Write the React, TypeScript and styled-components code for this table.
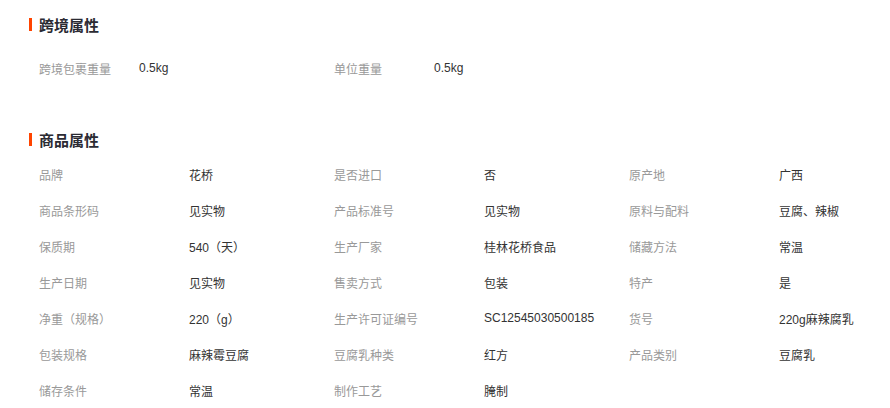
import React from 'react';
import styled, { createGlobalStyle } from 'styled-components';

const GlobalStyle = createGlobalStyle`
  body {
    margin: 0;
    background: #fff;
    font-family: "Liberation Sans", "Noto Sans CJK SC", sans-serif;
  }
`;

const Page = styled.div`
  padding: 10px 0 0 29px;
  width: 861px;
`;

const Section = styled.div<{ $top?: number }>`
  margin-top: ${p => p.$top || 0}px;
`;

const Heading = styled.h3`
  display: flex;
  align-items: center;
  height: 28px;
  margin: 0;
  font-size: 15px;
  font-weight: bold;
  color: #2b2b33;
  &::before {
    content: '';
    display: block;
    width: 3px;
    height: 13px;
    background: #ff4400;
    margin-right: 7px;
  }
`;

const Grid = styled.div<{ $label: number; $value: number; $top: number }>`
  display: grid;
  grid-template-columns: repeat(3, ${p => p.$label}px ${p => p.$value}px);
  grid-auto-rows: 36px;
  margin-top: ${p => p.$top}px;
  padding-left: 10px;
`;

const Label = styled.div`
  display: flex;
  align-items: center;
  font-size: 12px;
  color: #999;
  white-space: nowrap;
`;

const Value = styled(Label)`
  color: #333;
`;

type Pair = [string, string];

const crossBorder: Pair[] = [
  ['跨境包裹重量', '0.5kg'],
  ['单位重量', '0.5kg'],
];

const product: Pair[] = [
  ['品牌', '花桥'],
  ['是否进口', '否'],
  ['原产地', '广西'],
  ['商品条形码', '见实物'],
  ['产品标准号', '见实物'],
  ['原料与配料', '豆腐、辣椒'],
  ['保质期', '540（天）'],
  ['生产厂家', '桂林花桥食品'],
  ['储藏方法', '常温'],
  ['生产日期', '见实物'],
  ['售卖方式', '包装'],
  ['特产', '是'],
  ['净重（规格）', '220（g）'],
  ['生产许可证编号', 'SC12545030500185'],
  ['货号', '220g麻辣腐乳'],
  ['包装规格', '麻辣霉豆腐'],
  ['豆腐乳种类', '红方'],
  ['产品类别', '豆腐乳'],
  ['储存条件', '常温'],
  ['制作工艺', '腌制'],
];

const renderPairs = (pairs: Pair[]) =>
  pairs.map(([k, v]) => (
    <React.Fragment key={k}>
      <Label>{k}</Label>
      <Value>{v}</Value>
    </React.Fragment>
  ));

export default function App() {
  return (
    <>
      <GlobalStyle />
      <Page>
        <Section>
          <Heading>跨境属性</Heading>
          <Grid $label={100} $value={195} $top={12}>
            {renderPairs(crossBorder)}
          </Grid>
        </Section>
        <Section $top={39}>
          <Heading>商品属性</Heading>
          <Grid $label={150} $value={145} $top={3}>
            {renderPairs(product)}
          </Grid>
        </Section>
      </Page>
    </>
  );
}
